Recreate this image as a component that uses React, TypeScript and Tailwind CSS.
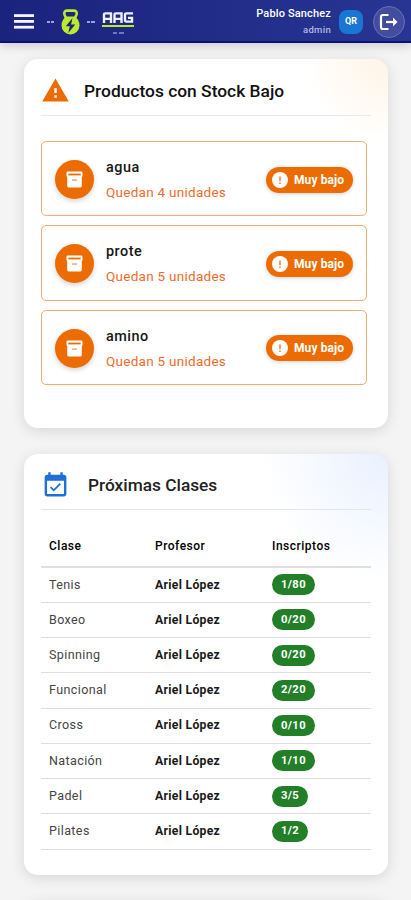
import React from "react";
import { MdWarning, MdEventAvailable } from "react-icons/md";

const productos = [
  { nombre: "agua", unidades: 4 },
  { nombre: "prote", unidades: 5 },
  { nombre: "amino", unidades: 5 },
];

const clases = [
  { nombre: "Tenis", profesor: "Ariel López", inscriptos: "1/80" },
  { nombre: "Boxeo", profesor: "Ariel López", inscriptos: "0/20" },
  { nombre: "Spinning", profesor: "Ariel López", inscriptos: "0/20" },
  { nombre: "Funcional", profesor: "Ariel López", inscriptos: "2/20" },
  { nombre: "Cross", profesor: "Ariel López", inscriptos: "0/10" },
  { nombre: "Natación", profesor: "Ariel López", inscriptos: "1/10" },
  { nombre: "Padel", profesor: "Ariel López", inscriptos: "3/5" },
  { nombre: "Pilates", profesor: "Ariel López", inscriptos: "1/2" },
];

function MenuIcon() {
  return (
    <svg className="ml-[14px] h-[15px] w-[20px]" viewBox="0 0 20 15" fill="#f4f5ff">
      <rect width="20" height="2.8" y="0.2" />
      <rect width="20" height="2.8" y="6" />
      <rect width="20" height="2.8" y="11.8" />
    </svg>
  );
}

function LogoutIcon() {
  return (
    <svg className="h-[18px] w-[20px]" viewBox="0 0 20 18" fill="none" stroke="#fff" strokeWidth="2.2">
      <path d="M9.5 2H4Q2 2 2 4v10q0 2 2 2h5.5" />
      <path d="M7 9h9" />
      <path d="M14 4.600 18.500 9 14 13.400z" fill="#fff" stroke="none" />
    </svg>
  );
}

function BoxIcon() {
  return (
    <svg className="size-[17px]" viewBox="0 0 17 17">
      <rect x="0.5" y="0.5" width="16" height="5.5" rx="1.2" fill="#fff" />
      <rect x="1.2" y="3.5" width="14.6" height="13" rx="1.4" fill="#fff" />
      <rect x="2.4" y="2.6" width="12.2" height="1.8" fill="#ed6c02" />
      <rect x="6" y="8.4" width="5" height="1.3" fill="#f19a55" />
    </svg>
  );
}

function AlertDot() {
  return (
    <svg className="size-[16px]" viewBox="0 0 16 16">
      <circle cx="8" cy="8" r="8" fill="#fff" />
      <path d="M7.2 4.6h1.6v4.600H7.2zM7.2 10.4h1.6V12H7.2z" fill="#ee8030" />
      <path d="M6.2 6.200 8 4.300l1.800 1.900z" fill="#f5b27d" />
    </svg>
  );
}

function Logo() {
  return (
    <div className="ml-[13px] flex items-center">
      <div className="flex gap-px">
        <div className="h-[2px] w-[3px] bg-[#9ba1dd]" />
        <div className="h-[2px] w-[3px] bg-[#9ba1dd]" />
      </div>
      {/* Kettlebell */}
      <svg className="ml-[7px] h-[26px] w-[19px]" viewBox="0 0 19 26">
        <path
          d="M5.2 9.5 3.4 5.4C2.8 2.8 4.2 1.6 6.2 1.6h6.6c2 0 3.4 1.2 2.8 3.8l-1.8 4.1"
          fill="none"
          stroke="#bdea2f"
          strokeWidth="2.6"
        />
        <path d="M5 7.600h9q4.500 4 4.500 8.800a9 9 0 0 1-18 0Q.5 11.600 5 7.600z" fill="#bdea2f" />
        <path d="M11.5 9 4.8 17.3h4L7.3 24l6.9-8.5h-4.1z" fill="#1a237e" />
      </svg>
      <div className="ml-[7px] flex gap-px">
        <div className="h-[2px] w-[3px] bg-[#9ba1dd]" />
        <div className="h-[2px] w-[4px] bg-[#9ba1dd]" />
      </div>
      {/* Wordmark */}
      <div className="mt-[3px] ml-[7px] flex w-[32px] flex-col items-center">
        <svg className="h-[11px] w-[32px]" viewBox="0 0 32 12" preserveAspectRatio="none">
          <g fill="none" stroke="#eef0ff" strokeWidth="2.4">
            <path d="M2 12V3q0-1.500 1.500-1.500H9V12M2 7.500h7" />
            <path d="M12.500 12V3q0-1.500 1.500-1.500h5.500V12M12.500 7.500h7" />
            <path d="M31 1.500h-6.500Q23 1.500 23 3v6q0 1.500 1.500 1.500H30V6.500h-4" />
          </g>
        </svg>
        <div className="mt-[2px] h-[2px] w-[32px] bg-[#bdea2f]" />
        <div className="mt-[5px] flex gap-[2px]">
          <div className="h-[2px] w-[4px] bg-[#7078bd]" />
          <div className="h-[2px] w-[5px] bg-[#7078bd]" />
        </div>
      </div>
    </div>
  );
}

function Header() {
  return (
    <header className="relative flex h-[43px] items-center border-b-2 border-[#0b1078] bg-linear-to-r from-[#1a237e] to-[#283593] pt-[2px] shadow-[0_2px_10px_rgba(0,0,0,0.2)]">
      <MenuIcon />
      <Logo />
      <div className="ml-auto text-right text-white">
        <p className="text-[11px] leading-[16px] font-medium tracking-[0.15px]">Pablo Sanchez</p>
        <p className="text-[9.5px] leading-[16px] font-medium tracking-[0.3px] text-[#b3b8e2]">admin</p>
      </div>
      <div className="ml-[8px] flex size-[24px] items-center justify-center rounded-[8px] bg-[#1976d2] text-[9px] font-bold text-white">
        QR
      </div>
      <button className="mr-[6px] ml-[10px] flex size-[32px] items-center justify-center rounded-full border border-[#6870b5] bg-[#434d9e]">
        <LogoutIcon />
      </button>
    </header>
  );
}

function StockBajo() {
  return (
    <section className="h-[369px] rounded-[14px] bg-white bg-[radial-gradient(circle_at_100%_0%,#fff4e6_0px,#fffaf3_48px,#ffffff_82px)] px-[17px] shadow-[0_3px_14px_rgba(0,0,0,0.12)]">
      <div className="flex h-[57px] items-center border-b border-[#e9e9e9] pt-[7px]">
        <MdWarning className="size-[29px] text-[#ed6c02]" />
        <h2 className="ml-[14px] pt-px text-[17.4px] font-medium text-[#111]">Productos con Stock Bajo</h2>
      </div>
      <ul className="mt-[25px] mr-[4px] flex flex-col gap-[9px]">
        {productos.map((p) => (
          <li
            key={p.nombre}
            className="flex h-[75.3px] items-center rounded-[5px] border border-[#f8ab6e] bg-white px-[13px] pt-[2px]"
          >
            <div className="flex size-[39px] items-center justify-center rounded-full bg-[#ed6c02] shadow-[0_2px_5px_rgba(0,0,0,0.18)]">
              <BoxIcon />
            </div>
            <div className="ml-[12px]">
              <p className="text-[14.4px] leading-[21px] font-medium tracking-[0.5px] text-[#161616]">{p.nombre}</p>
              <p className="mt-[4px] text-[13.5px] leading-[20px] tracking-[0.27px] text-[#ed6c2c]">
                Quedan {p.unidades} unidades
              </p>
            </div>
            <div className="ml-auto flex h-[26px] w-[87px] items-center rounded-full bg-[#ed6c02] pl-[6px] text-white shadow-[0_1px_4px_rgba(0,0,0,0.18)]">
              <AlertDot />
              <span className="ml-[6px] text-[12px] font-bold tracking-[0.1px]">Muy bajo</span>
            </div>
          </li>
        ))}
      </ul>
    </section>
  );
}

function ProximasClases() {
  return (
    <section className="mt-[26px] h-[421px] rounded-[14px] bg-white bg-[radial-gradient(circle_at_100%_0%,#e9f1ff_0px,#f3f7ff_60px,#ffffff_125px)] px-[17px] shadow-[0_3px_14px_rgba(0,0,0,0.12)]">
      <div className="flex h-[56px] items-center border-b border-[#e2e5ea] pt-[8px]">
        <MdEventAvailable className="size-[29px] text-[#1f6fd6]" />
        <h2 className="ml-[18px] text-[17.3px] font-medium text-[#222]">Próximas Clases</h2>
      </div>
      <table className="mt-[16px] w-full table-fixed border-collapse text-left text-[12px]">
        <thead>
          <tr className="h-[41px] border-b-2 border-[#dfdfdf]">
            <th className="w-[106px] pl-[8px] font-medium tracking-[0.5px]">Clase</th>
            <th className="w-[117px] pl-[8px] font-medium tracking-[0.5px]">Profesor</th>
            <th className="pl-[8px] font-medium tracking-[0.5px]">Inscriptos</th>
          </tr>
        </thead>
        <tbody>
          {clases.map((c) => (
            <tr key={c.nombre} className="h-[35.25px] border-b border-[#dedede]">
              <td className="pl-[8px] text-[12.5px] tracking-[0.4px] text-[#444]">{c.nombre}</td>
              <td className="pl-[8px] text-[12.2px] font-bold tracking-[0.3px] text-[#1a1a1a]">{c.profesor}</td>
              <td className="pl-[8px]">
                <span className="flex h-[21px] w-fit items-center rounded-full bg-[#237f27] px-[9px] pt-px text-[11.2px] font-bold tracking-[0.4px] text-white">
                  {c.inscriptos}
                </span>
              </td>
            </tr>
          ))}
        </tbody>
      </table>
    </section>
  );
}

export default function App() {
  return (
    <div className="h-[900px] overflow-hidden bg-[#f4f4f4] font-['Roboto',sans-serif]">
      <Header />
      <main className="pt-[16px] pr-[23px] pl-[24px]">
        <StockBajo />
        <ProximasClases />
        <section className="mt-[26px] h-[100px] rounded-[14px] bg-white shadow-[0_3px_14px_rgba(0,0,0,0.12)]" />
      </main>
    </div>
  );
}
